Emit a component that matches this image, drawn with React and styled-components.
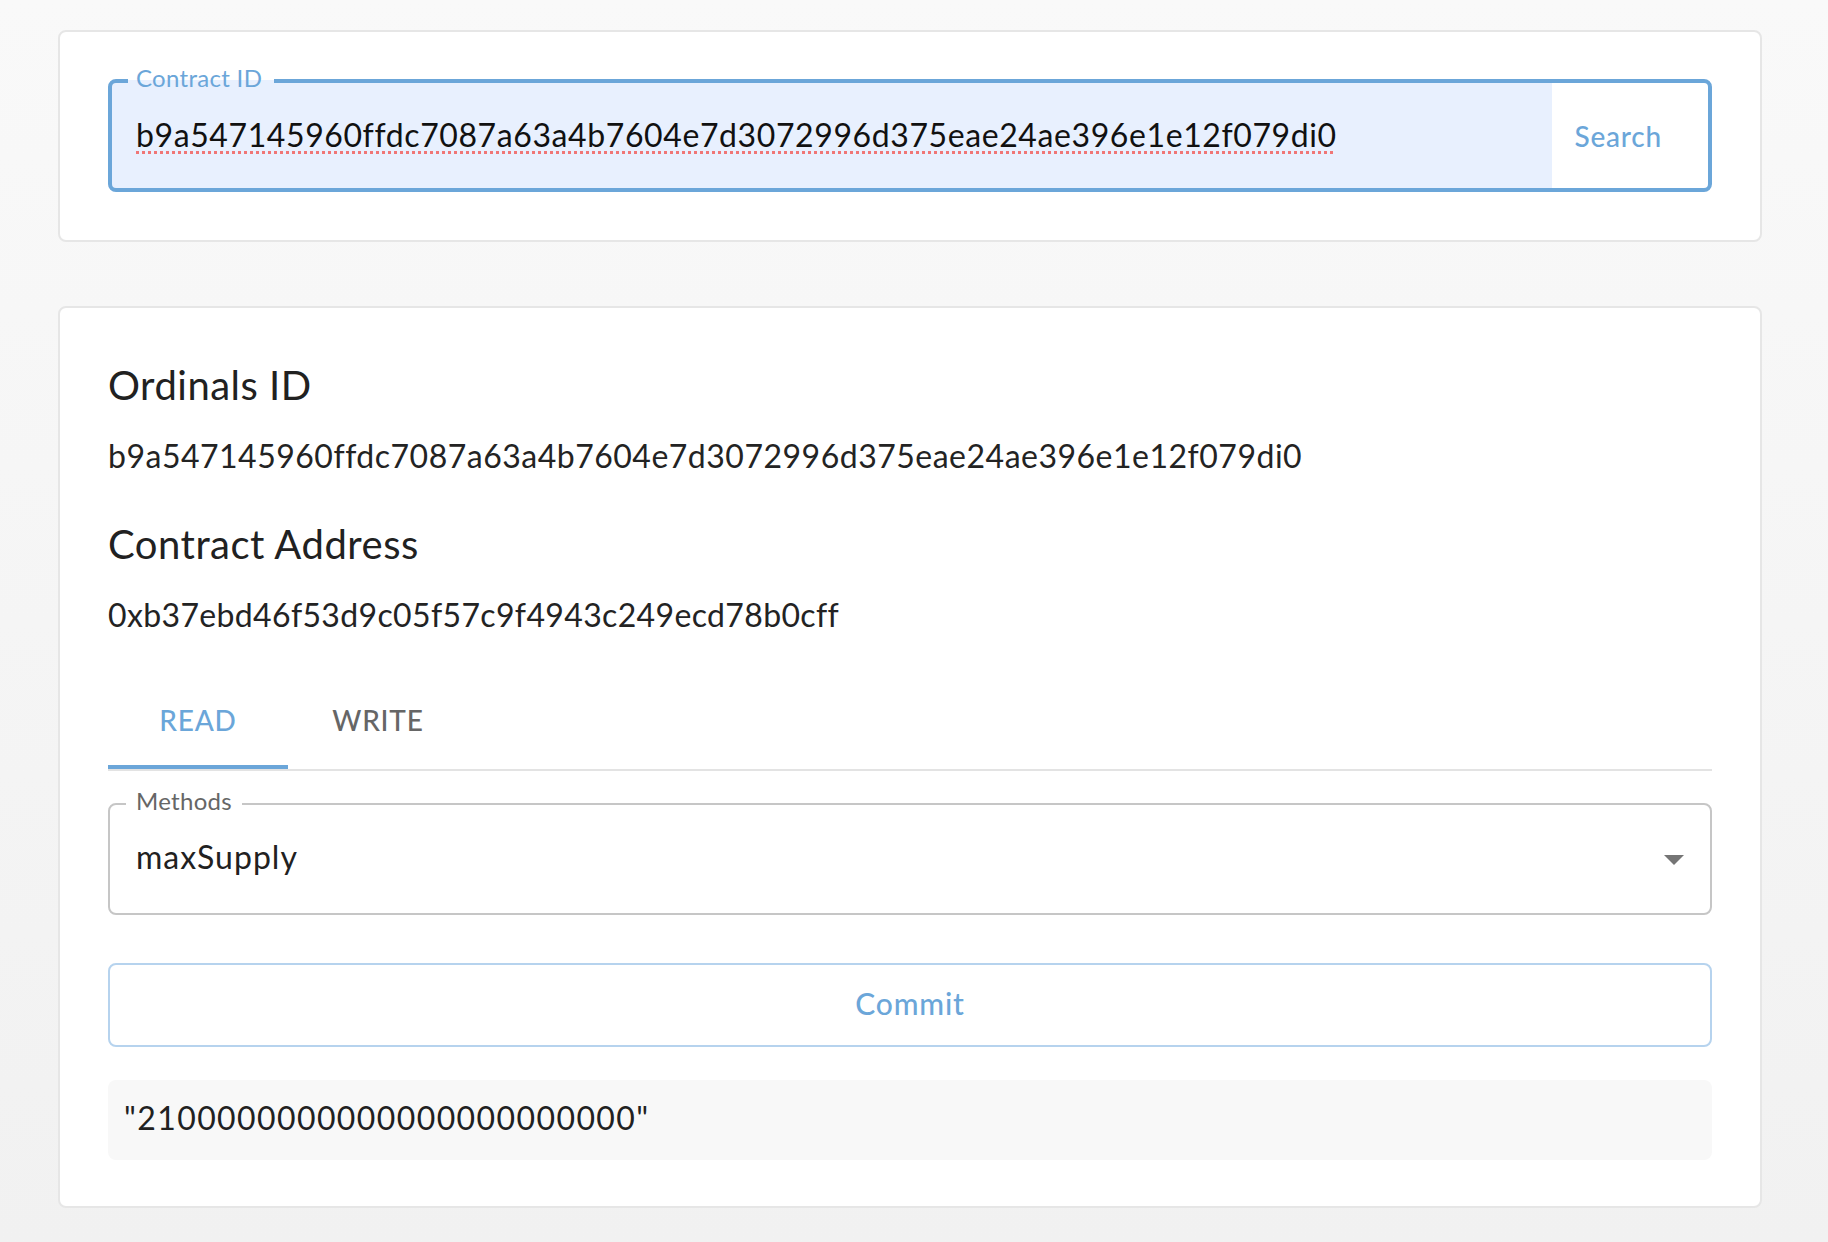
import React from 'react';
import styled, { createGlobalStyle } from 'styled-components';

const BLUE = '#6ba6d9';

const GlobalStyle = createGlobalStyle`
  * { box-sizing: border-box; }
  html {
    min-height: 100%;
    background: linear-gradient(180deg, #f9f9f9 0%, #f1f1f1 100%);
  }
  body {
    margin: 0;
    padding: 0;
    min-height: 1242px;
    font-family: Lato, "Open Sans", sans-serif;
    color: #212121;
  }
`;

const Page = styled.main`
  width: 1704px;
  margin-left: 58px;
  padding-top: 30px;
  display: flex;
  flex-direction: column;
  gap: 64px;
`;

const Card = styled.section`
  background: #fff;
  border: 2px solid #e6e6e6;
  border-radius: 8px;
  padding: 48px 48px ${(p) => p.$pb || 48}px;
  display: flex;
  flex-direction: column;
`;

const FieldRoot = styled.div`
  position: relative;
  height: 112px;
  display: flex;
  align-items: center;
  border-radius: 8px;
  margin-top: ${(p) => p.$mt || 0}px;
  padding-right: ${(p) => p.$pr || 0}px;
`;

const Outline = styled.fieldset`
  position: absolute;
  top: -10px;
  left: 0;
  right: 0;
  bottom: 0;
  margin: 0;
  padding: 0 16px;
  min-width: 0;
  text-align: left;
  pointer-events: none;
  border-radius: 8px;
  border: ${(p) => (p.$focused ? `4px solid ${BLUE}` : '2px solid #c6c6c6')};
`;

const Legend = styled.legend`
  float: unset;
  width: auto;
  display: block;
  overflow: hidden;
  padding: 0;
  height: 22px;
  max-width: 100%;
  white-space: nowrap;
  visibility: hidden;
  font-size: 24px;
  letter-spacing: 0.3px;

  & > span {
    display: inline-block;
    padding: 0 10px;
    opacity: 0;
  }
`;

const FloatLabel = styled.label`
  position: absolute;
  left: 28px;
  top: -14px;
  z-index: 1;
  font-size: 24px;
  line-height: 24px;
  letter-spacing: 0.3px;
  white-space: nowrap;
  pointer-events: none;
  color: ${(p) => (p.$focused ? BLUE : '#666')};
`;

const TextInput = styled.input`
  flex: 1;
  align-self: stretch;
  min-width: 0;
  margin: 0;
  border: none;
  outline: none;
  padding: 0 28px 4px;
  border-radius: 8px 0 0 8px;
  background: #e8f0fe;
  font-family: inherit;
  font-size: 32px;
  letter-spacing: 0.6px;
  color: #111;
  text-decoration: underline dotted #f07676;
  text-decoration-thickness: 3px;
  text-underline-offset: 4px;
`;

const SearchButton = styled.button`
  border: none;
  background: transparent;
  padding: 0 22px;
  height: 72px;
  font-family: inherit;
  font-size: 28px;
  font-weight: 500;
  letter-spacing: 0.8px;
  color: ${BLUE};
  cursor: pointer;
`;

const Heading = styled.h2`
  margin: ${(p) => p.$mt || 0}px 0 18px;
  font-size: 40px;
  font-weight: 400;
  line-height: 58px;
  letter-spacing: 0.5px;
  color: #212121;
`;

const Value = styled.p`
  margin: 0;
  font-size: 32px;
  line-height: 48px;
  letter-spacing: ${(p) => p.$ls || 0.5}px;
  color: #232323;
`;

const TabList = styled.div`
  display: flex;
  margin-top: 34px;
  border-bottom: 2px solid #e3e3e3;
`;

const Tab = styled.button`
  position: relative;
  min-width: 180px;
  height: 96px;
  padding: 0 32px 3px;
  border: none;
  background: none;
  display: flex;
  align-items: center;
  justify-content: center;
  font-family: inherit;
  font-size: 28px;
  font-weight: 500;
  letter-spacing: 0.8px;
  text-transform: uppercase;
  color: ${(p) => (p.$active ? BLUE : '#666')};
  cursor: pointer;

  &::after {
    content: '';
    position: absolute;
    left: 0;
    right: 0;
    bottom: 0;
    height: 4px;
    background: ${(p) => (p.$active ? BLUE : 'transparent')};
  }
`;

const SelectValue = styled.div`
  flex: 1;
  padding: 0 28px;
  margin-bottom: 4px;
  font-size: 32px;
  line-height: 48px;
  letter-spacing: 1px;
  color: #212121;
`;

const ArrowIcon = styled.svg`
  width: 48px;
  height: 48px;
  margin-right: 14px;
  fill: #757575;
`;

const CommitButton = styled.button`
  margin-top: 48px;
  height: 84px;
  width: 100%;
  padding: 0 0 4px;
  border: 2px solid #b6d3ee;
  border-radius: 8px;
  background: #fff;
  font-family: inherit;
  font-size: 30px;
  font-weight: 500;
  letter-spacing: 0.8px;
  color: ${BLUE};
  cursor: pointer;
`;

const Result = styled.div`
  margin-top: 33px;
  padding: 14px 16px 18px;
  border-radius: 8px;
  background: #f8f8f8;
  font-size: 32px;
  line-height: 48px;
  letter-spacing: 1.4px;
  color: #212121;
`;

function OutlinedField({ label, focused, children, ...rest }) {
  return (
    <FieldRoot {...rest}>
      <FloatLabel $focused={focused}>{label}</FloatLabel>
      {children}
      <Outline $focused={focused} aria-hidden="true">
        <Legend>
          <span>{label}</span>
        </Legend>
      </Outline>
    </FieldRoot>
  );
}

const ID = 'b9a547145960ffdc7087a63a4b7604e7d3072996d375eae24ae396e1e12f079di0';

export default function App() {
  return (
    <>
      <GlobalStyle />
      <Page>
        <Card>
          <OutlinedField label="Contract ID" focused $pr={28}>
            <TextInput defaultValue={ID} spellCheck={false} />
            <SearchButton>Search</SearchButton>
          </OutlinedField>
        </Card>

        <Card $pb={46}>
          <Heading>Ordinals ID</Heading>
          <Value>{ID}</Value>
          <Heading $mt={35}>Contract Address</Heading>
          <Value $ls={0.35}>0xb37ebd46f53d9c05f57c9f4943c249ecd78b0cff</Value>

          <TabList role="tablist">
            <Tab $active role="tab">Read</Tab>
            <Tab role="tab">Write</Tab>
          </TabList>

          <OutlinedField label="Methods" $mt={32}>
            <SelectValue>maxSupply</SelectValue>
            <ArrowIcon viewBox="0 0 24 24">
              <path d="M7 10l5 5 5-5z" />
            </ArrowIcon>
          </OutlinedField>

          <CommitButton>Commit</CommitButton>

          <Result>"2100000000000000000000000"</Result>
        </Card>
      </Page>
    </>
  );
}
